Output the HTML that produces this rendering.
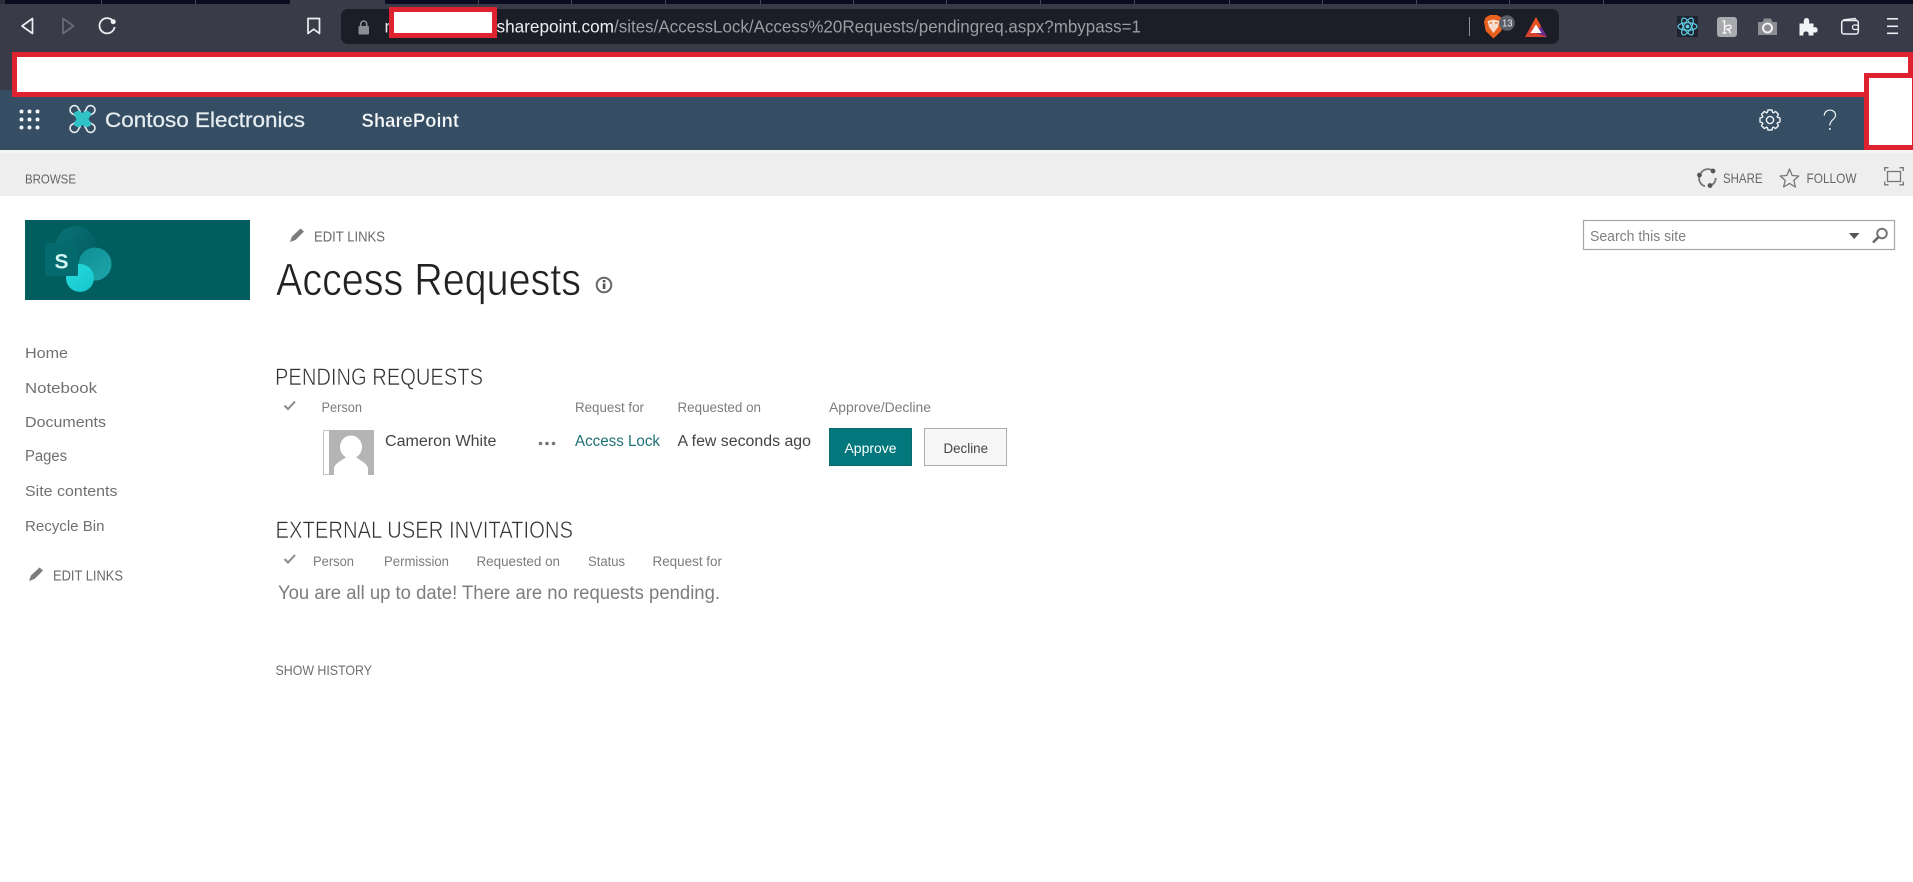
<!DOCTYPE html>
<html lang="en">
<head>
<meta charset="utf-8">
<title>Access Requests</title>
<style>
html,body{margin:0;padding:0;background:#fff;width:1913px;height:882px;overflow:hidden}
svg{display:block}
text{font-family:"Liberation Sans",sans-serif;white-space:pre}
.thin{stroke:#fff;stroke-width:.7px}
.g{fill:#6e6e6e}
.h{fill:#7c7c7c;font-size:13.5px}
</style>
</head>
<body>
<svg width="1913" height="882" viewBox="0 0 1913 882" xmlns="http://www.w3.org/2000/svg">
<defs>
<linearGradient id="l1" x1="0" y1="0" x2="1" y2="1"><stop offset="0" stop-color="#0a7478"/><stop offset="1" stop-color="#03585c"/></linearGradient>
<linearGradient id="l2" x1="0" y1="0" x2="1" y2="1"><stop offset="0" stop-color="#0d8d92"/><stop offset="1" stop-color="#1fa6aa"/></linearGradient>
<linearGradient id="l3" x1="0" y1="0" x2="1" y2="1"><stop offset="0" stop-color="#25dde0"/><stop offset="1" stop-color="#16c4ca"/></linearGradient>
</defs>
<!-- browser chrome -->
<rect x="0" y="0" width="1913" height="90" fill="#393b49"/>
<rect x="0" y="0" width="1913" height="4" fill="#0b0c1f"/>
<rect x="0" y="0" width="5" height="4" fill="#2d2e3a"/>
<rect x="290" y="0" width="95" height="4" fill="#393b49"/>
<g fill="#4a4c58">
<rect x="101" y="0" width="1" height="4"/><rect x="195" y="0" width="1" height="4"/><rect x="478" y="0" width="1" height="4"/><rect x="571" y="0" width="1" height="4"/><rect x="665" y="0" width="1" height="4"/><rect x="760" y="0" width="1" height="4"/><rect x="853" y="0" width="1" height="4"/><rect x="946" y="0" width="1" height="4"/><rect x="1040" y="0" width="1" height="4"/><rect x="1134" y="0" width="1" height="4"/><rect x="1229" y="0" width="1" height="4"/><rect x="1322" y="0" width="1" height="4"/><rect x="1416" y="0" width="1" height="4"/><rect x="1509" y="0" width="1" height="4"/><rect x="1603" y="0" width="1" height="4"/>
</g>
<!-- nav icons -->
<path d="M32.5 18.5 L22 26 L32.5 33.5 Z" fill="none" stroke="#eceef2" stroke-width="1.7" stroke-linejoin="round"/>
<path d="M63 18.5 L73.5 26 L63 33.5 Z" fill="none" stroke="#6a6c78" stroke-width="1.7" stroke-linejoin="round"/>
<path d="M113.4 21.5 A7.6 7.6 0 1 0 114.6 27" fill="none" stroke="#eceef2" stroke-width="1.8"/>
<circle cx="113.2" cy="21.7" r="2.5" fill="#eceef2"/>
<path d="M308 18.5 H319.5 V33.5 L313.7 29.2 L308 33.5 Z" fill="none" stroke="#eceef2" stroke-width="1.7" stroke-linejoin="round"/>
<!-- address bar -->
<rect x="341" y="9" width="1218" height="35" rx="7" fill="#1b1d27"/>
<rect x="358.5" y="26" width="10.5" height="8.5" rx="1" fill="#8b8d93"/>
<path d="M360.7 26 V24 a3 3 0 0 1 6 0 V26" fill="none" stroke="#8b8d93" stroke-width="1.6"/>
<text x="384.5" y="32.5" font-size="17.5" fill="#e8e8ea">r</text>
<text x="496.5" y="32.5" font-size="17.5" fill="#eeeef0" textLength="117.5" lengthAdjust="spacingAndGlyphs">sharepoint.com</text>
<text x="614" y="32.5" font-size="17.5" fill="#9b9da3" textLength="527" lengthAdjust="spacingAndGlyphs">/sites/AccessLock/Access%20Requests/pendingreq.aspx?mbypass=1</text>
<rect x="1469" y="17" width="1" height="19" fill="#8e9096"/>
<!-- brave -->
<path d="M1485.5 17.5 L1490 15 H1497 L1501.5 17.5 L1503 22 L1501.3 31 L1493.5 38.5 L1485.7 31 L1484 22 Z" fill="#e8611e"/>
<path d="M1487.5 21 L1493.5 19.5 L1499.5 21 L1498 27 L1493.5 33 L1489 27 Z" fill="#f5dccb"/>
<path d="M1489.5 23 h2.5 M1495 23 h2.5" stroke="#e8611e" stroke-width="1.3"/>
<circle cx="1507" cy="23" r="7.8" fill="#5a5e69"/>
<text x="1502" y="26.5" font-size="10" fill="#e8e8ec" textLength="10.5" lengthAdjust="spacingAndGlyphs">13</text>
<!-- BAT -->
<path d="M1536 17 L1525 37 H1547 Z" fill="#9b2f5e"/>
<path d="M1536 17 L1530 28 H1542 Z" fill="#e8501f"/>
<path d="M1525 37 L1530.5 27 L1536 32 L1547 37 Z" fill="#d8432c"/>
<path d="M1547 37 L1541 26 L1536 33 Z" fill="#6a2d8f"/>
<path d="M1536 24.5 L1530.5 33 H1541.5 Z" fill="#fff"/>
<!-- react -->
<rect x="1677" y="16" width="21" height="21" fill="#1d2430"/>
<g fill="none" stroke="#60cfe6" stroke-width="1.2">
<ellipse cx="1687.5" cy="26.5" rx="9.5" ry="3.8"/>
<ellipse cx="1687.5" cy="26.5" rx="9.5" ry="3.8" transform="rotate(60 1687.5 26.5)"/>
<ellipse cx="1687.5" cy="26.5" rx="9.5" ry="3.8" transform="rotate(120 1687.5 26.5)"/>
</g>
<circle cx="1687.5" cy="26.5" r="1.9" fill="#60cfe6"/>
<!-- k -->
<rect x="1717" y="17" width="20" height="20" rx="3" fill="#a9aaae"/>
<path d="M1724.5 20.5 V33 M1722.5 33 H1726.5 M1724.5 27.5 C1727 24.5 1731 24.5 1731 27 C1731 29 1728 29.5 1726 29 C1729 29.5 1730 31 1730.5 33.5 M1722.5 21 H1725" fill="none" stroke="#f4f4f4" stroke-width="1.4"/>
<!-- camera -->
<path d="M1758 22 H1762.5 L1764 18.5 H1771 L1772.5 22 H1777 V35 H1758 Z" fill="#8d8e93"/>
<circle cx="1767.5" cy="28" r="4.5" fill="none" stroke="#f0f0f0" stroke-width="2"/>
<!-- puzzle -->
<path d="M1799.5 23.5 H1804 C1803.3 20 1804.3 18 1806.5 18 C1808.7 18 1809.7 20 1809 23.5 H1813.5 V27.5 C1816 26.5 1817.6 27.8 1817.6 30 C1817.6 32.2 1816 33.2 1813.5 32.2 V35.5 H1808.5 C1809 32.5 1808 31.5 1806 31.5 C1804 31.5 1803 32.5 1803.5 35.5 H1799.5 Z" fill="#f2f3f5"/>
<!-- wallet -->
<path d="M1843 20 L1855 18.5 L1857 21" fill="none" stroke="#eceef2" stroke-width="1.4"/>
<rect x="1841.7" y="20.5" width="16.6" height="13.5" rx="2.2" fill="none" stroke="#eceef2" stroke-width="1.5"/>
<rect x="1852.5" y="25" width="5.8" height="4.5" rx="2" fill="#393b49" stroke="#eceef2" stroke-width="1.3"/>
<!-- menu -->
<g fill="#eceef2"><rect x="1887" y="18" width="11" height="1.6"/><rect x="1887" y="25.5" width="11" height="1.6"/><rect x="1887" y="32.5" width="11" height="1.6"/></g>

<!-- suite bar -->
<rect x="0" y="90" width="1913" height="60" fill="#364e63"/>
<rect x="0" y="150" width="1913" height="46" fill="#eeeeee"/>
<rect x="0" y="150" width="1913" height="3" fill="#f4f4f4"/>
<g fill="#f2f5f7">
<circle cx="21.5" cy="111.5" r="2"/><circle cx="29.5" cy="111.5" r="2"/><circle cx="37.5" cy="111.5" r="2"/>
<circle cx="21.5" cy="119.5" r="2"/><circle cx="29.5" cy="119.5" r="2"/><circle cx="37.5" cy="119.5" r="2"/>
<circle cx="21.5" cy="127.5" r="2"/><circle cx="29.5" cy="127.5" r="2"/><circle cx="37.5" cy="127.5" r="2"/>
</g>
<!-- drone logo -->
<g fill="none" stroke="#e6eef0" stroke-width="1.6">
<path d="M76 116 L73 114 A4.3 4.3 0 1 1 78.5 108.8 L80.5 112"/>
<path d="M89 116 L92 114 A4.3 4.3 0 1 0 86.5 108.8 L84.5 112"/>
<path d="M76 122 L73 124 A4.3 4.3 0 1 0 78.5 129.2 L80.5 126"/>
<path d="M89 122 L92 124 A4.3 4.3 0 1 1 86.5 129.2 L84.5 126"/>
</g>
<path d="M75 112 L78.5 110.5 L82.5 113 L86.5 110.5 L90 112 L91.5 114 L88.5 119 L91.5 124 L90 126 L86.5 127.5 L82.5 125 L78.5 127.5 L75 126 L73.5 124 L76.5 119 L73.5 114 Z" fill="#2fc2c6"/>
<text x="105" y="127" font-size="21" fill="#e6edf0" stroke="#e6edf0" stroke-width=".25" textLength="200" lengthAdjust="spacingAndGlyphs">Contoso Electronics</text>
<text x="361.5" y="127" font-size="19" font-weight="700" fill="#f6f8f9" stroke="#364e63" stroke-width=".35" textLength="97.5" lengthAdjust="spacingAndGlyphs">SharePoint</text>
<!-- gear -->
<g transform="translate(1770 120)" fill="none" stroke="#eef2f4" stroke-width="1.4" stroke-linejoin="round">
<circle r="3.6"/>
<polyline points="-2.87,-6.93 -2,-10 2,-10 2.87,-6.93"/>
<polyline transform="rotate(45)" points="-2.87,-6.93 -2,-10 2,-10 2.87,-6.93"/>
<polyline transform="rotate(90)" points="-2.87,-6.93 -2,-10 2,-10 2.87,-6.93"/>
<polyline transform="rotate(135)" points="-2.87,-6.93 -2,-10 2,-10 2.87,-6.93"/>
<polyline transform="rotate(180)" points="-2.87,-6.93 -2,-10 2,-10 2.87,-6.93"/>
<polyline transform="rotate(225)" points="-2.87,-6.93 -2,-10 2,-10 2.87,-6.93"/>
<polyline transform="rotate(270)" points="-2.87,-6.93 -2,-10 2,-10 2.87,-6.93"/>
<polyline transform="rotate(315)" points="-2.87,-6.93 -2,-10 2,-10 2.87,-6.93"/>
</g>
<path d="M1824.3 115.5 C1824.5 108 1835.8 108.5 1835.5 115.5 C1835.3 119.5 1829.8 120 1829.8 125.5" fill="none" stroke="#eef2f4" stroke-width="1.2"/>
<circle cx="1829.8" cy="129" r="1" fill="#eef2f4"/>

<!-- red boxes -->
<rect x="14.5" y="54.5" width="1896" height="40" fill="#fff" stroke="#de2230" stroke-width="5"/>
<rect x="1911" y="52" width="2" height="45" fill="#de2230"/>
<rect x="1866.5" y="75.5" width="48" height="72" fill="#fff" stroke="#de2230" stroke-width="5"/>
<rect x="391.5" y="9.5" width="103" height="26" fill="#fff" stroke="#de2230" stroke-width="5"/>

<!-- ribbon -->
<text x="25" y="183.5" font-size="13" fill="#666" textLength="51" lengthAdjust="spacingAndGlyphs">BROWSE</text>
<path d="M1714.2 172 A8.2 8.2 0 0 0 1701 173 M1699.5 176 A8.2 8.2 0 0 0 1705 186.3 M1709.5 186 A8.2 8.2 0 0 0 1715.7 178" fill="none" stroke="#777" stroke-width="1.8"/>
<circle cx="1713" cy="171" r="2.4" fill="#555"/><circle cx="1699.5" cy="175" r="2.4" fill="#555"/><circle cx="1710" cy="185.5" r="2.4" fill="#555"/>
<text x="1723" y="183" font-size="14" fill="#666" textLength="39.5" lengthAdjust="spacingAndGlyphs">SHARE</text>
<polygon points="1789.5,169 1792.2,175.5 1798.8,176 1793.8,180.4 1795.4,187 1789.5,183.4 1783.6,187 1785.2,180.4 1780.2,176 1786.8,175.5" fill="none" stroke="#777" stroke-width="1.3" stroke-linejoin="round"/>
<text x="1806.5" y="183" font-size="14" fill="#666" textLength="50" lengthAdjust="spacingAndGlyphs">FOLLOW</text>
<rect x="1887.5" y="171.5" width="13" height="10" fill="none" stroke="#777" stroke-width="1.3"/>
<path d="M1884.7 171 V167.7 H1888.5 M1899.5 167.7 H1903.3 V171 M1884.7 181.5 V184.8 H1888.5 M1899.5 184.8 H1903.3 V181.5" fill="none" stroke="#777" stroke-width="1.3"/>

<!-- site logo -->
<rect x="25" y="220" width="225" height="80" fill="#005e5e"/>
<circle cx="76" cy="246" r="20" fill="url(#l1)"/>
<circle cx="95" cy="264" r="16.5" fill="url(#l2)"/>
<circle cx="80" cy="278" r="14" fill="url(#l3)"/>
<rect x="45" y="243" width="33" height="33" rx="1.5" fill="#056a6e"/>
<text x="54.5" y="268.5" font-size="21" font-weight="700" fill="#d0f5f2">S</text>

<!-- left nav -->
<g font-size="15" fill="#707070">
<text x="25" y="358" textLength="43" lengthAdjust="spacingAndGlyphs">Home</text>
<text x="25" y="393" textLength="72" lengthAdjust="spacingAndGlyphs">Notebook</text>
<text x="25" y="427" textLength="81" lengthAdjust="spacingAndGlyphs">Documents</text>
<text x="25" y="461" font-size="15.5" textLength="42" lengthAdjust="spacingAndGlyphs">Pages</text>
<text x="25" y="496" textLength="92.5" lengthAdjust="spacingAndGlyphs">Site contents</text>
<text x="25" y="531" textLength="79.5" lengthAdjust="spacingAndGlyphs">Recycle Bin</text>
</g>
<path d="M29 581 L31 575.5 L39.5 567.5 L43 570.5 L34.5 579 Z" fill="#7c7c7c"/>
<text x="53" y="580.5" font-size="14.5" fill="#6a6a6a" textLength="70" lengthAdjust="spacingAndGlyphs">EDIT LINKS</text>

<!-- title -->
<path d="M290 242 L292 236.5 L300.5 228.5 L304 231.5 L295.5 240 Z" fill="#7c7c7c"/>
<text x="314" y="241.5" font-size="14.5" fill="#6a6a6a" textLength="71" lengthAdjust="spacingAndGlyphs">EDIT LINKS</text>
<text class="thin" x="276" y="295" font-size="45" fill="#222" textLength="305" lengthAdjust="spacingAndGlyphs">Access Requests</text>
<circle cx="604" cy="285" r="7.3" fill="none" stroke="#666" stroke-width="2"/>
<rect x="602.8" y="283.5" width="2.6" height="5.5" fill="#555"/><rect x="602.8" y="280" width="2.6" height="2.3" fill="#555"/>

<!-- search -->
<rect x="1583.5" y="220.5" width="311" height="29" fill="#fff" stroke="#a6a6a6" stroke-width="1.2"/>
<text x="1590" y="241" font-size="15" fill="#808080" textLength="96" lengthAdjust="spacingAndGlyphs">Search this site</text>
<polygon points="1849,233 1859.5,233 1854.2,239" fill="#555"/>
<circle cx="1882" cy="233.5" r="4.8" fill="none" stroke="#777" stroke-width="2"/>
<path d="M1878.5 237 L1873 242.5" stroke="#666" stroke-width="2.6"/>

<!-- pending -->
<text class="thin" x="275" y="385" font-size="24" fill="#333" style="stroke-width:.55px" textLength="208" lengthAdjust="spacingAndGlyphs">PENDING REQUESTS</text>
<polyline points="284.5,405.5 288,409 295,401.5" fill="none" stroke="#8a8a8a" stroke-width="2"/>
<text class="h" x="321.5" y="412" textLength="40.5" lengthAdjust="spacingAndGlyphs">Person</text>
<text class="h" x="575" y="412" textLength="69" lengthAdjust="spacingAndGlyphs">Request for</text>
<text class="h" x="677.5" y="412" textLength="83.5" lengthAdjust="spacingAndGlyphs">Requested on</text>
<text class="h" x="829" y="412" textLength="102" lengthAdjust="spacingAndGlyphs">Approve/Decline</text>

<rect x="323.5" y="430.5" width="6" height="44" fill="#fff" stroke="#c4c4c4" stroke-width="1"/>
<rect x="329" y="430" width="45" height="45" fill="#b4b4b4"/>
<ellipse cx="351" cy="447" rx="11" ry="11.5" fill="#fff"/>
<path d="M334 475 V468 C335 463 343 460 346 457 H356 C359 460 367 463 368 468 V475 Z" fill="#fff"/>
<text x="385" y="446" font-size="15.5" fill="#444" textLength="111.5" lengthAdjust="spacingAndGlyphs">Cameron White</text>
<g fill="#777"><circle cx="540.5" cy="443.5" r="1.8"/><circle cx="547" cy="443.5" r="1.8"/><circle cx="553.5" cy="443.5" r="1.8"/></g>
<text x="575" y="446" font-size="15.5" fill="#1d7075" textLength="85" lengthAdjust="spacingAndGlyphs">Access Lock</text>
<text x="677.5" y="446" font-size="15.5" fill="#444" textLength="133.5" lengthAdjust="spacingAndGlyphs">A few seconds ago</text>
<rect x="829" y="428" width="83" height="38" fill="#03787c"/>
<rect x="829.5" y="428.5" width="82" height="37" fill="none" stroke="#0c6a6c"/>
<text x="844.5" y="453" font-size="13.5" fill="#fff" textLength="52" lengthAdjust="spacingAndGlyphs">Approve</text>
<rect x="924.5" y="428.5" width="82" height="37" fill="#f6f6f6" stroke="#ababab"/>
<text x="943.5" y="453" font-size="13.5" fill="#444" textLength="44.5" lengthAdjust="spacingAndGlyphs">Decline</text>

<!-- external -->
<text class="thin" x="275.5" y="538" font-size="24" fill="#333" style="stroke-width:.55px" textLength="297.5" lengthAdjust="spacingAndGlyphs">EXTERNAL USER INVITATIONS</text>
<polyline points="284.5,559 288,562.5 295,555" fill="none" stroke="#8a8a8a" stroke-width="2"/>
<text class="h" x="313" y="566" textLength="41" lengthAdjust="spacingAndGlyphs">Person</text>
<text class="h" x="384" y="566" textLength="65" lengthAdjust="spacingAndGlyphs">Permission</text>
<text class="h" x="476.5" y="566" textLength="83.5" lengthAdjust="spacingAndGlyphs">Requested on</text>
<text class="h" x="588" y="566" textLength="37" lengthAdjust="spacingAndGlyphs">Status</text>
<text class="h" x="652.5" y="566" textLength="69.5" lengthAdjust="spacingAndGlyphs">Request for</text>
<text x="278" y="599" font-size="19" fill="#7d7d7d" textLength="442" lengthAdjust="spacingAndGlyphs">You are all up to date! There are no requests pending.</text>
<text x="275.5" y="675" font-size="14" fill="#6e6e6e" textLength="96.5" lengthAdjust="spacingAndGlyphs">SHOW HISTORY</text>
</svg>
</body>
</html>
